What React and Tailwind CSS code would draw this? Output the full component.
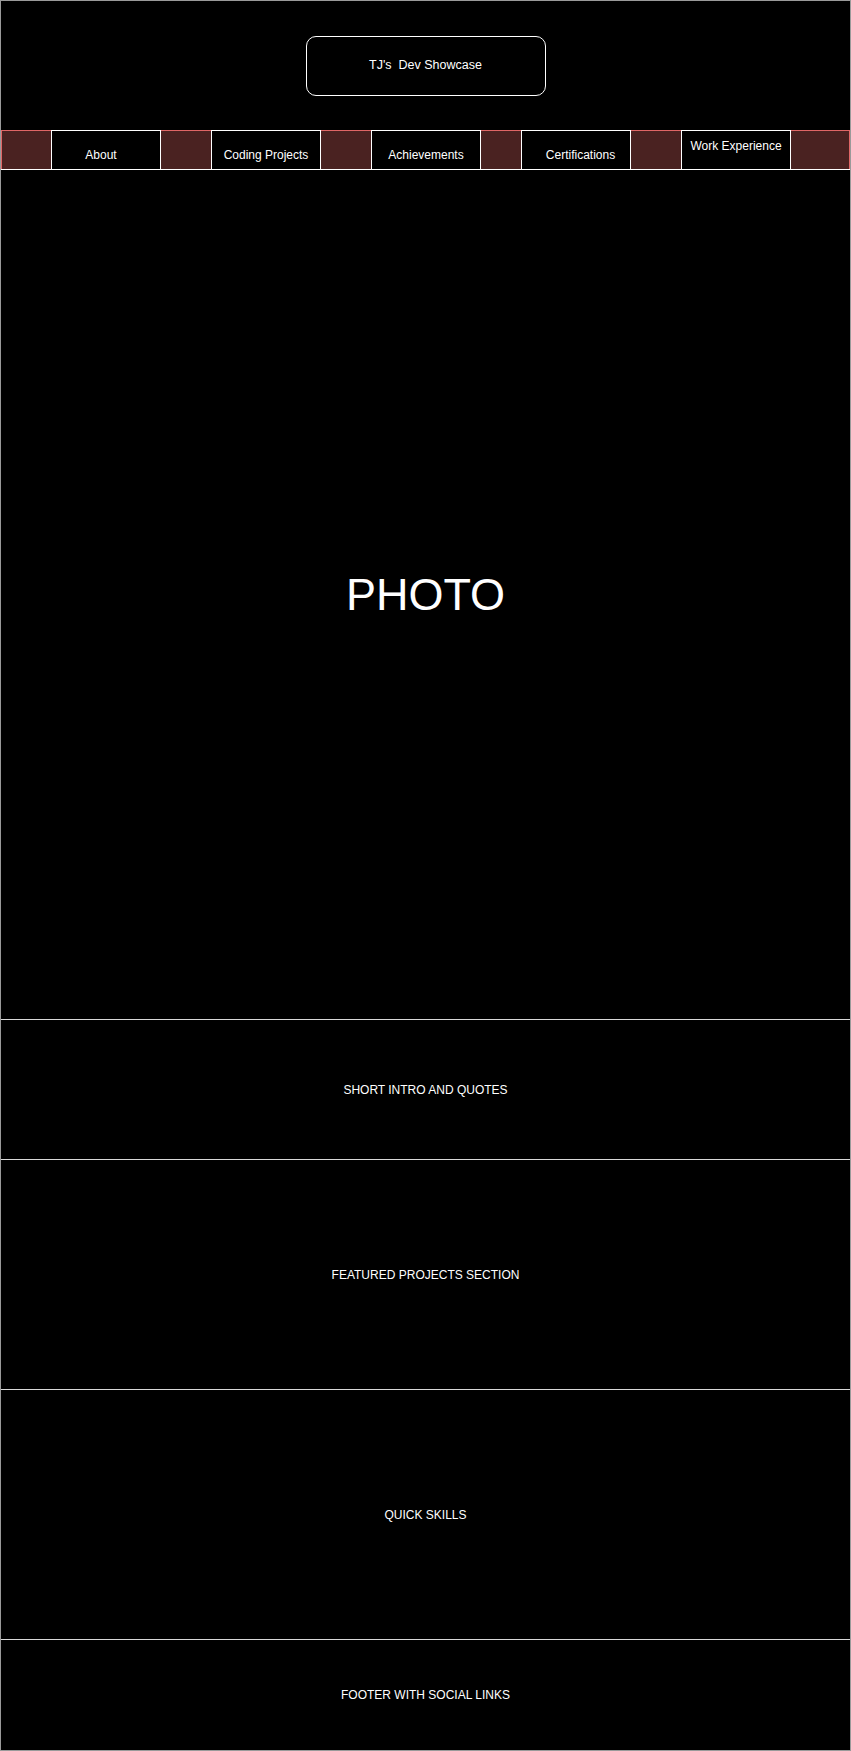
import React from 'react';

const font = { fontFamily: '"Liberation Sans", Arial, sans-serif' };

const navItems = [
  { type: 'gap', w: 'w-[50px]', edge: 'border-l' },
  { type: 'link', w: 'w-[110px]', label: 'About', nudge: 'pr-[10px]' },
  { type: 'gap', w: 'w-[50px]' },
  { type: 'link', w: 'w-[110px]', label: 'Coding Projects' },
  { type: 'gap', w: 'w-[50px]' },
  { type: 'link', w: 'w-[110px]', label: 'Achievements' },
  { type: 'gap', w: 'w-[40px]' },
  { type: 'link', w: 'w-[110px]', label: 'Certifications', nudge: 'pl-[9px]' },
  { type: 'gap', w: 'w-[50px]' },
  { type: 'link', w: 'w-[110px]', label: 'Work Experience', top: true },
  { type: 'gap', w: 'flex-1', edge: 'border-r' },
];

const Section = ({ h, children }) => (
  <div className={`${h} flex items-center justify-center border-b border-[#d9d9d9] text-white text-[12px]`}>
    {children}
  </div>
);

const App = () => {
  return (
    <div className="w-[851px] h-[1751px] bg-black border-x border-[#9a9a9a] border-t border-t-[#9a9a9a] flex flex-col" style={font}>
      <header className="h-[129px] flex items-center justify-center">
        <div className="w-[240px] h-[60px] border border-white rounded-[10px] flex items-center justify-center text-white text-[12.5px] whitespace-pre">
          TJ's  Dev Showcase
        </div>
      </header>

      <nav className="h-[40px] flex border-b border-white">
        {navItems.map((item, i) =>
          item.type === 'gap' ? (
            <div
              key={i}
              className={`${item.w} h-full bg-[#4a2221] border-t border-[#e06666] ${item.edge === 'border-l' ? 'border-l' : ''} ${item.edge === 'border-r' ? 'border-r' : ''}`}
            />
          ) : (
            <div
              key={i}
              className={`${item.w} h-full bg-black border-t border-x border-white flex justify-center text-white text-[12px] leading-[16px] ${item.top ? 'items-start pt-[7px]' : 'items-end pb-[6px]'} ${item.nudge || ''}`}
            >
              {item.label}
            </div>
          )
        )}
      </nav>

      <Section h="h-[850px]">
        <span className="text-[45px] leading-none">PHOTO</span>
      </Section>
      <Section h="h-[140px]">SHORT INTRO AND QUOTES</Section>
      <Section h="h-[230px]">FEATURED PROJECTS SECTION</Section>
      <Section h="h-[250px]">QUICK SKILLS</Section>
      <div className="flex-1 flex items-center justify-center text-white text-[12px] border-b border-[#9a9a9a]">
        FOOTER WITH SOCIAL LINKS
      </div>
    </div>
  );
};

export default App;
